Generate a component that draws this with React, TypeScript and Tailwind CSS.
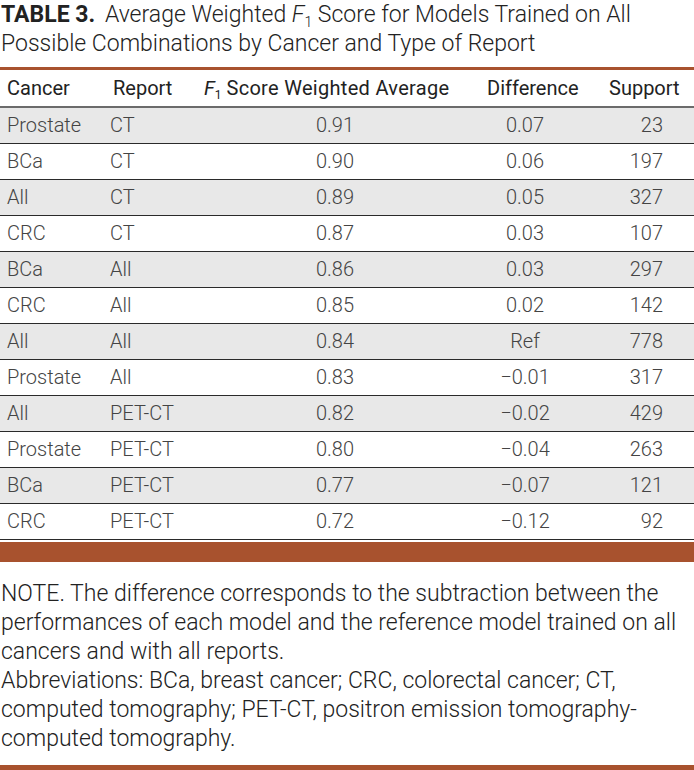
import React from 'react';

const rows: [string, string, string, string, string][] = [
  ['Prostate', 'CT', '0.91', '0.07', '23'],
  ['BCa', 'CT', '0.90', '0.06', '197'],
  ['All', 'CT', '0.89', '0.05', '327'],
  ['CRC', 'CT', '0.87', '0.03', '107'],
  ['BCa', 'All', '0.86', '0.03', '297'],
  ['CRC', 'All', '0.85', '0.02', '142'],
  ['All', 'All', '0.84', 'Ref', '778'],
  ['Prostate', 'All', '0.83', '\u22120.01', '317'],
  ['All', 'PET-CT', '0.82', '\u22120.02', '429'],
  ['Prostate', 'PET-CT', '0.80', '\u22120.04', '263'],
  ['BCa', 'PET-CT', '0.77', '\u22120.07', '121'],
  ['CRC', 'PET-CT', '0.72', '\u22120.12', '92'],
];

const F1 = ({ sub = 'text-[12px] top-[4px]' }: { sub?: string }) => (
  <span className="italic">
    F<sub className={`not-italic align-baseline relative ${sub}`}>1</sub>
  </span>
);

export default function App() {
  return (
    <div className="w-[694px] h-[770px] bg-white overflow-hidden font-['Roboto','Liberation_Sans',sans-serif]">
      <h1 className="text-[23px] leading-[29px] text-[#222] pl-[1px]">
        <span className="font-bold mr-[4px]">TABLE 3.</span>{' '}
        <span className="font-light">
          Average Weighted <F1 sub="text-[14px] top-[5px]" /> Score for Models Trained on All Possible Combinations by
          Cancer and Type of Report
        </span>
      </h1>

      <div className="mt-[9px] border-t-[3px] border-[#a8522e]">
        <table className="w-full border-collapse text-[20px] text-[#444]">
          <colgroup>
            <col className="w-[102px]" />
            <col className="w-[98px]" />
            <col className="w-[270px]" />
            <col className="w-[110px]" />
            <col className="w-[114px]" />
          </colgroup>
          <thead>
            <tr className="h-[37px] border-b-[2px] border-[#6b6b6b] text-[#222]">
              <th className="text-left font-normal pl-[7px]">Cancer</th>
              <th className="text-left font-normal pl-[11px]">Report</th>
              <th className="text-left font-normal pl-[4px]">
                <F1 /> <span className="tracking-[0.3px]">Score Weighted Average</span>
              </th>
              <th className="text-left font-normal pl-[17px]">Difference</th>
              <th className="text-left font-normal pl-[29px]">Support</th>
            </tr>
          </thead>
          <tbody className="font-light">
            {rows.map((r, i) => (
              <tr
                key={i}
                className={`h-[36px] border-b border-[#2a2a2a] ${i % 2 === 0 ? 'bg-[#e8e8e8]' : 'bg-white'}`}
              >
                <td className="pl-[7px]">{r[0]}</td>
                <td className="pl-[8px]">{r[1]}</td>
                <td className="text-center">{r[2]}</td>
                <td className="text-center">{r[3]}</td>
                <td className="text-right pr-[31px]">{r[4]}</td>
              </tr>
            ))}
          </tbody>
        </table>
        <div className="mt-[2px] h-[20px] bg-[#a8522e]" />
      </div>

      <div className="mt-[17px] text-[23px] leading-[29px] text-[#222] font-light pl-[1px]">
        <p>
          NOTE. The difference corresponds to the subtraction between the performances of each model and the reference
          model trained on all cancers and with all reports.
        </p>
        <p>
          Abbreviations: BCa, breast cancer; CRC, colorectal cancer; CT, computed tomography; PET-CT, positron emission
          tomography-computed tomography.
        </p>
      </div>
      <div className="mt-[12px] h-[5px] bg-[#a8522e]" />
    </div>
  );
}
